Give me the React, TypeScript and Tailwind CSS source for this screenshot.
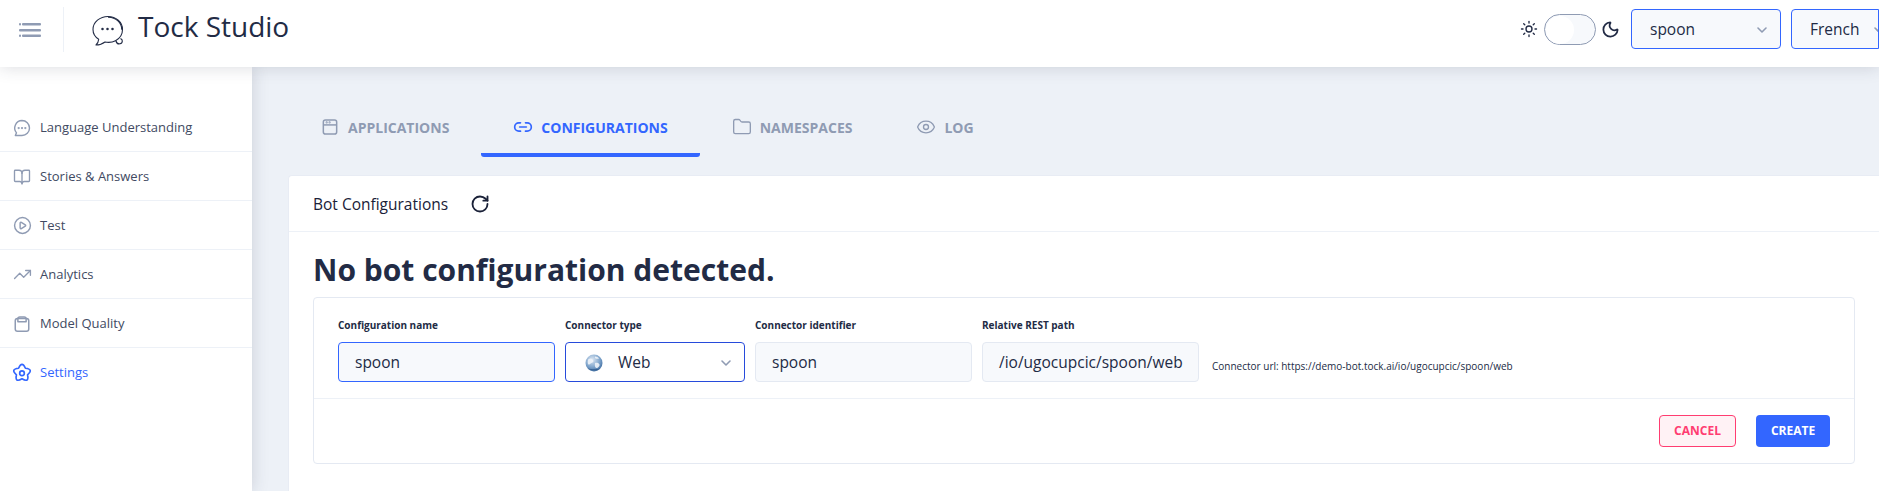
import React from 'react';
import { BookOpen, ChevronDown, CirclePlay, Eye, Folder, Link2, Moon, RotateCw, Sun, TrendingUp } from 'lucide-react';

const font = { fontFamily: '"Open Sans", sans-serif' };

function MessageIcon({ className }: { className?: string }) {
  return (
    <svg viewBox="0 0 24 24" fill="none" stroke="currentColor" strokeWidth="1.7" strokeLinejoin="round" className={className}>
      <path d="M12 3a9 9 0 0 1 0 18H4l1.4-3.2A9 9 0 0 1 12 3z" />
      <circle cx="8" cy="12" r="0.5" fill="currentColor" />
      <circle cx="12" cy="12" r="0.5" fill="currentColor" />
      <circle cx="16" cy="12" r="0.5" fill="currentColor" />
    </svg>
  );
}

function SaveIcon({ className }: { className?: string }) {
  return (
    <svg viewBox="0 0 24 24" fill="none" stroke="currentColor" strokeWidth="2" strokeLinejoin="round" className={className}>
      <rect x="3" y="4.500" width="18" height="17" rx="3" />
      <path d="M6.500 9V5a2.500 2.500 0 0 1 2.500-2.500h6A2.500 2.500 0 0 1 17.500 5v4z" />
    </svg>
  );
}

function SettingsIcon({ className }: { className?: string }) {
  return (
    <svg viewBox="0 0 24 24" fill="none" stroke="currentColor" strokeWidth="2" strokeLinejoin="round" className={className}>
      <path d="M7.890 6.340Q12 -3 16.110 6.340Q26.270 7.360 18.660 14.160Q20.820 24.140 12 19Q3.180 24.140 5.340 14.160Q-2.270 7.360 7.890 6.340Z" />
      <circle cx="12" cy="12.300" r="2.800" />
    </svg>
  );
}

function BrowserIcon({ className }: { className?: string }) {
  return (
    <svg viewBox="0 0 24 24" fill="none" stroke="currentColor" strokeWidth="1.8" className={className}>
      <rect x="4" y="3.500" width="16" height="17" rx="2.500" />
      <path d="M4 9.500h16" />
      <circle cx="8" cy="6.500" r="0.400" fill="currentColor" />
      <circle cx="11.500" cy="6.500" r="0.400" fill="currentColor" />
    </svg>
  );
}

function MenuIcon() {
  return (
    <svg viewBox="0 0 22 14" className="w-[22px] h-[14px]" fill="#8f9bb3">
      <rect x="0" y="0" width="2" height="2.500" rx="1" />
      <rect x="3" y="0" width="19" height="2.500" rx="1" />
      <rect x="0" y="6" width="22" height="2.500" rx="1" />
      <rect x="0" y="11.500" width="2" height="2.500" rx="1" />
      <rect x="3" y="11.500" width="19" height="2.500" rx="1" />
    </svg>
  );
}

function TockLogo() {
  return (
    <svg viewBox="0 0 34 34" className="w-[34px] h-[34px]" fill="none" stroke="#222b45" strokeWidth="1.100" strokeLinecap="round" strokeLinejoin="round">
      <path d="M17 2.500c8 0 14.500 5.500 14.500 13 0 5-2.800 9-7 11.200-3 1.600-7 2-10.500 1.300-2.500 2-5.500 3-9 3 1.500-1.500 2.500-3.500 2.700-5.800C4 23 2 19.500 2 15.500c0-7.500 7-13 15-13z" />
      <path d="M17.500 3.200c7.500.2 13.200 5.300 13.200 12" />
      <path d="M25 27c.5 2 2.200 3.200 4 2.800 1.300-.3 2.300-1.400 2.300-2.800 0-1-.6-1.800-1.500-2.200" />
      <circle cx="11.500" cy="15" r="0.700" fill="#222b45" />
      <circle cx="16.500" cy="15" r="0.700" fill="#222b45" />
      <circle cx="21.500" cy="15" r="0.700" fill="#222b45" />
    </svg>
  );
}

function GlobeIcon() {
  return (
    <svg viewBox="0 0 18 18" className="w-[18px] h-[18px] shrink-0">
      <defs>
        <radialGradient id="globe" cx="0.4" cy="0.3" r="0.8">
          <stop offset="0" stopColor="#dbe6f2" />
          <stop offset="0.55" stopColor="#7fa5cc" />
          <stop offset="1" stopColor="#2f5f96" />
        </radialGradient>
      </defs>
      <circle cx="9" cy="9" r="8.500" fill="url(#globe)" />
      <path d="M3.500 5c2-1 3.500-.5 4.500 1s0 2.500-1.500 3-2 2-3 1.500-1-4 0-5.500zM10 9c2-.5 4 0 4.500 1.500S13 14 11.500 14s-2-3-1.500-5zM10 2.500c1.500 0 3.500.8 4 2-1 .5-3 .5-4-.5z" fill="#eef3f8" opacity="0.9" />
      <path d="M3 14.500c2 2.400 10 2.400 12 0-2 1-10 1-12 0z" fill="#1f4a7d" opacity="0.7" />
    </svg>
  );
}

const menuItems = [
  { label: 'Language Understanding', icon: <MessageIcon className="w-[20px] h-[20px] shrink-0" /> },
  { label: 'Stories & Answers', icon: <BookOpen className="w-[18px] h-[18px] shrink-0" strokeWidth={1.8} /> },
  { label: 'Test', icon: <CirclePlay className="w-[19px] h-[19px] shrink-0" strokeWidth={1.8} /> },
  { label: 'Analytics', icon: <TrendingUp className="w-[19px] h-[19px] shrink-0" strokeWidth={1.7} /> },
  { label: 'Model Quality', icon: <SaveIcon className="w-[18px] h-[18px] shrink-0" /> },
  { label: 'Settings', icon: <SettingsIcon className="w-[20px] h-[20px] shrink-0" />, active: true },
];

function Sidebar() {
  return (
    <aside className="w-[252px] shrink-0 bg-white pt-[36px] shadow-[0_0_16px_rgba(44,51,73,0.18)] relative">
      {menuItems.map((item) => (
        <div
          key={item.label}
          className={`h-[49px] flex items-center pl-[12px] gap-[8px] pt-[1px] border-b border-[#edf1f7] text-[13px] font-medium last:border-b-0 ${
            item.active ? 'text-[#3366ff]' : 'text-[#414a62]'
          }`}
        >
          <span className={`w-[20px] flex justify-center ${item.active ? 'text-[#3366ff]' : 'text-[#8f9bb3]'}`}>{item.icon}</span>
          <span>{item.label}</span>
        </div>
      ))}
    </aside>
  );
}

const tabs = [
  { label: 'APPLICATIONS', icon: <BrowserIcon className="w-[20px] h-[20px]" /> },
  { label: 'CONFIGURATIONS', icon: <Link2 className="w-[20px] h-[20px]" strokeWidth={2} />, active: true },
  { label: 'NAMESPACES', icon: <Folder className="w-[20px] h-[20px]" strokeWidth={1.6} /> },
  { label: 'LOG', icon: <Eye className="w-[20px] h-[20px]" strokeWidth={1.6} /> },
];

function Tabs() {
  return (
    <div className="flex h-[60px] items-start">
      {tabs.map((tab) => (
        <div
          key={tab.label}
          className={`h-[60px] px-[32px] flex items-center gap-[8px] pt-[4px] text-[14px] font-bold border-b-4 rounded-b-[3px] ${
            tab.active ? 'text-[#3366ff] border-[#3366ff]' : 'text-[#8f9bb3] border-transparent'
          }`}
        >
          {tab.icon}
          <span>{tab.label}</span>
        </div>
      ))}
    </div>
  );
}

function Field({ label, width, children }: { label: string; width: string; children: React.ReactNode }) {
  return (
    <div className={`flex flex-col gap-[10px] shrink-0 ${width}`}>
      <label className="text-[10px] leading-[14px] font-bold text-[#222b45]">{label}</label>
      {children}
    </div>
  );
}

function ConfigForm() {
  return (
    <div className="border border-[#e4e9f2] rounded-[4px] h-[167px]">
      <div className="h-[101px] border-b border-[#edf1f7] pl-[24px] pt-[19px] flex items-end pb-[16px] gap-[10px]">
        <Field label="Configuration name" width="w-[217px]">
          <div className="h-[40px] pt-[2px] border border-[#3366ff] bg-[#f7f9fc] rounded-[4px] pl-[16px] flex items-center text-[15.500px] text-[#222b45]">
            spoon
          </div>
        </Field>
        <Field label="Connector type" width="w-[180px]">
          <div className="h-[40px] pt-[2px] border border-[#274bdb] bg-white rounded-[4px] pl-[19px] pr-[10px] flex items-center text-[15.500px] text-[#222b45]">
            <GlobeIcon />
            <span className="ml-[15px]">Web</span>
            <ChevronDown className="ml-auto w-[16px] h-[16px] text-[#8f9bb3]" strokeWidth={2.4} />
          </div>
        </Field>
        <Field label="Connector identifier" width="w-[217px]">
          <div className="h-[40px] pt-[2px] border border-[#e4e9f2] bg-[#f7f9fc] rounded-[4px] pl-[16px] flex items-center text-[15.500px] text-[#222b45]">
            spoon
          </div>
        </Field>
        <Field label="Relative REST path" width="w-[217px]">
          <div className="h-[40px] pt-[2px] border border-[#e4e9f2] bg-[#f7f9fc] rounded-[4px] pl-[16px] flex items-center text-[15.500px] text-[#222b45] whitespace-nowrap overflow-hidden">
            /io/ugocupcic/spoon/web
          </div>
        </Field>
        <span className="ml-[3px] mb-[9px] text-[10px] leading-[14px] text-[#222b45] whitespace-nowrap">
          Connector url: https://demo-bot.tock.ai/io/ugocupcic/spoon/web
        </span>
      </div>
      <div className="h-[64px] flex items-center justify-end gap-[20px] pr-[24px]">
        <button className="w-[77px] h-[32px] border border-[#ff3d71] bg-[#fff2f5] text-[#ff3d71] rounded-[4px] text-[12px] font-bold">
          CANCEL
        </button>
        <button className="w-[74px] h-[32px] bg-[#3366ff] text-white rounded-[4px] text-[12px] font-bold">CREATE</button>
      </div>
    </div>
  );
}

export default function App() {
  return (
    <div className="w-[1879px] h-[491px] overflow-hidden flex flex-col bg-[#edf1f7] text-[#222b45]" style={font}>
      <header className="h-[67px] shrink-0 bg-white flex items-center relative z-10 shadow-[0_0_16px_rgba(44,51,73,0.18)]">
        <div className="w-[64px] h-[45px] mt-[-8px] border-r border-[#edf1f7] flex items-center pl-[19px] shrink-0">
          <MenuIcon />
        </div>
        <div className="ml-[27px] mt-[-5px]">
          <TockLogo />
        </div>
        <div className="ml-[13px] text-[28px] leading-[38px] text-[#222b45] mt-[-16px]">Tock Studio</div>
        <div className="ml-auto flex items-center mt-[-9px]">
          <Sun className="w-[18px] h-[18px] text-[#222b45]" strokeWidth={1.8} />
          <div className="ml-[6px] w-[52px] h-[31px] rounded-full border border-[#8f9bb3] bg-[#f7f9fc] p-[1px]">
            <div className="w-[28px] h-[28px] rounded-full bg-white" />
          </div>
          <Moon className="ml-[5px] w-[19px] h-[19px] text-[#222b45]" strokeWidth={2.2} />
          <div className="ml-[11px] w-[150px] h-[40px] pt-[2px] border border-[#3366ff] bg-[#f7f9fc] rounded-[4px] pl-[18px] pr-[10px] flex items-center justify-between text-[15.500px] text-[#222b45]">
            <span>spoon</span>
            <ChevronDown className="w-[16px] h-[16px] text-[#8f9bb3]" strokeWidth={2.4} />
          </div>
          <div className="ml-[10px] w-[88px] h-[40px] pt-[2px] border border-[#3366ff] bg-[#f7f9fc] rounded-l-[4px] pl-[18px] flex items-center gap-[12px] text-[15.500px] text-[#222b45] overflow-hidden">
            <span>French</span>
            <ChevronDown className="w-[16px] h-[16px] shrink-0 text-[#8f9bb3]" strokeWidth={2.4} />
          </div>
        </div>
      </header>
      <div className="flex flex-1 min-h-0">
        <Sidebar />
        <main className="flex-1 min-w-0 pl-[36px] pt-[30px]">
          <Tabs />
          <section className="mt-[18px] bg-white rounded-tl-[4px] border-t border-l border-[#e8ecf4] h-[400px]">
            <div className="h-[56px] border-b border-[#edf1f7] pl-[24px] flex items-center">
              <span className="pt-[2px] text-[15.500px] text-[#1a2138]">Bot Configurations</span>
              <RotateCw className="ml-[22px] w-[20px] h-[20px] text-[#1a2138]" strokeWidth={2.2} />
            </div>
            <div className="pl-[24px] pr-[24px]">
              <h1 className="text-[30px] leading-[40px] font-bold text-[#222b45] mt-[18px] mb-[7px]">No bot configuration detected.</h1>
              <ConfigForm />
            </div>
          </section>
        </main>
      </div>
    </div>
  );
}
